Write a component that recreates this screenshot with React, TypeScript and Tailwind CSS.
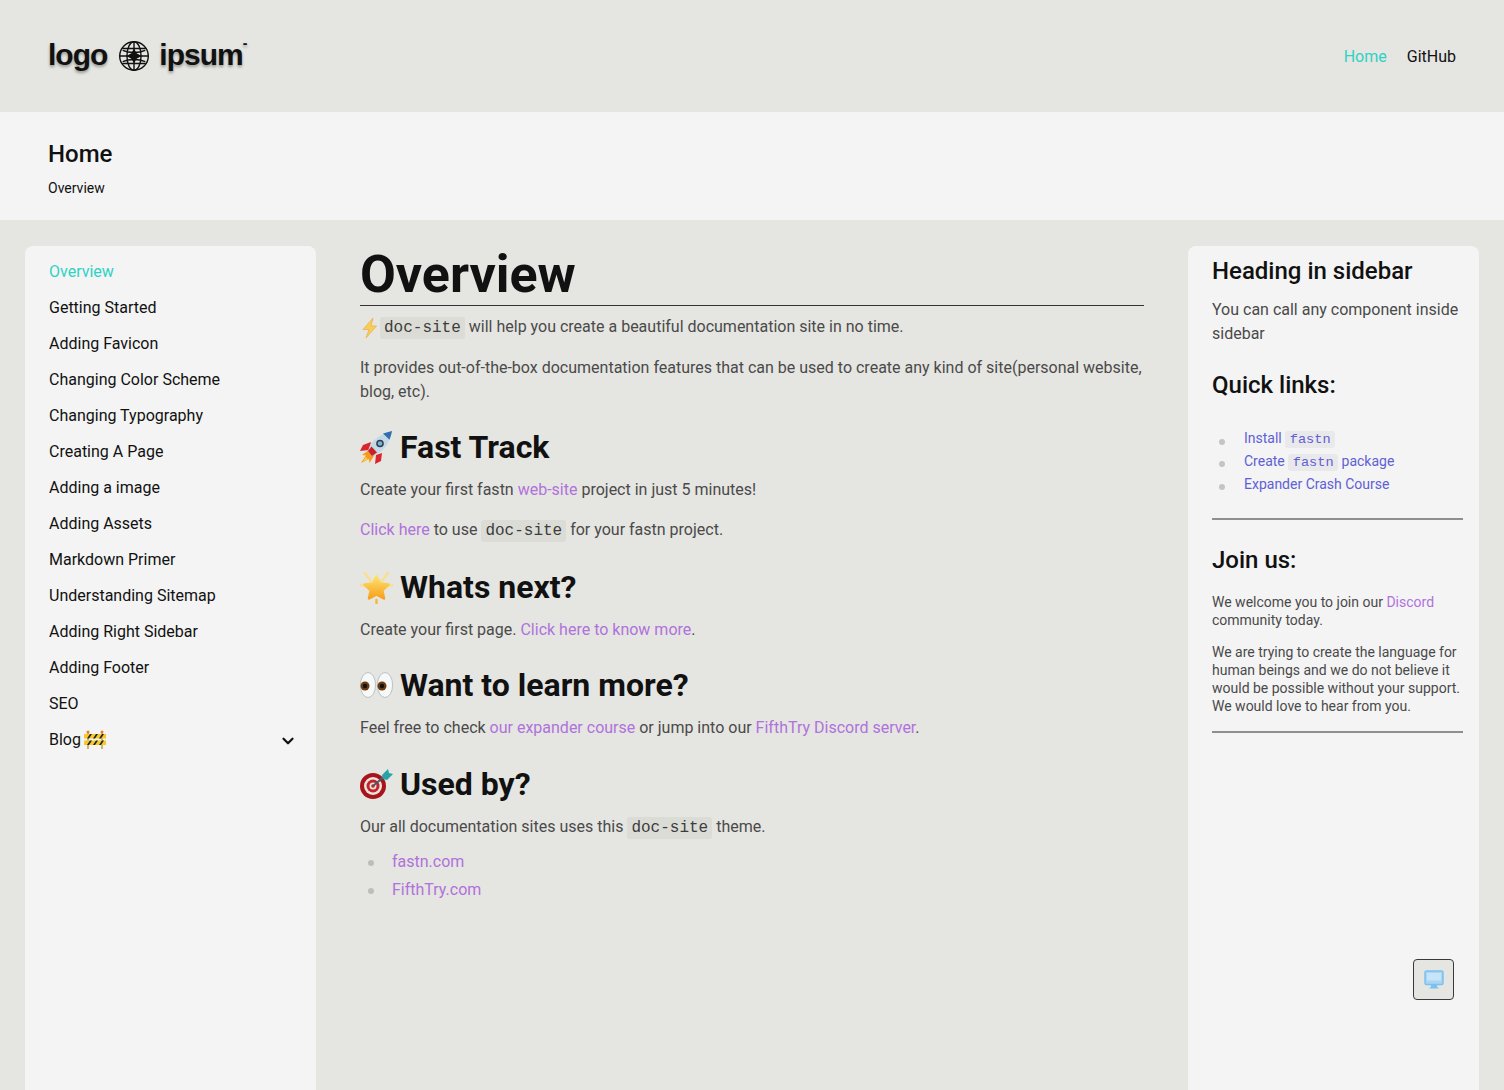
import React from 'react';
import { ChevronDown } from 'lucide-react';

const navItems = [
  'Overview',
  'Getting Started',
  'Adding Favicon',
  'Changing Color Scheme',
  'Changing Typography',
  'Creating A Page',
  'Adding a image',
  'Adding Assets',
  'Markdown Primer',
  'Understanding Sitemap',
  'Adding Right Sidebar',
  'Adding Footer',
  'SEO',
];

const Bolt = () => (
  <svg width="20" height="22" viewBox="0 0 20 22" className="shrink-0">
    <path d="M13 1 3 12.500h6L6 21 16.500 9H11z" fill="#f6cf5a" stroke="#eeb14a" strokeWidth="0.8" strokeLinejoin="round" />
  </svg>
);

const Rocket = () => (
  <svg width="33" height="33" viewBox="0 0 33 33" className="shrink-0">
    <path d="M9 19 2 24l4 .5L1 32l8-4 .5 4 5-8z" fill="#f59a1c" />
    <path d="M6 26l-3 4.500 5-2z" fill="#fbd13a" />
    <path d="M11 11 3 14 0 20l9-1z" fill="#d8262c" />
    <path d="M22 22l-1 8-6 3 1-9z" fill="#d8262c" />
    <path d="M8 20C10 10 20 3 32 0c-2 12-9 22-20 25z" fill="#c4d9e8" />
    <path d="M23 2.500C26 1.500 29 .7 32 0c-.5 3-1.400 6-2.600 8.800z" fill="#2f6fb0" />
    <path d="M8 20l4 5 5-3.500-5.500-6z" fill="#c8202a" />
    <circle cx="20" cy="12.500" r="3.800" fill="#2d3c48" />
    <circle cx="20" cy="12.500" r="2.300" fill="#78b2dd" />
  </svg>
);

const Star = () => (
  <svg width="33" height="33" viewBox="0 0 33 33" className="shrink-0">
    <defs>
      <linearGradient id="starFill" x1="0" y1="0" x2="0" y2="1">
        <stop offset="0" stopColor="#fde36f" />
        <stop offset="1" stopColor="#f9a01b" />
      </linearGradient>
    </defs>
    <path d="M5 2l6 8M28 2l-6 8M0 14l6 1M33 14l-6 1" stroke="#f9e08f" strokeWidth="2.500" strokeLinecap="round" />
    <path d="M16.500 29v3" stroke="#f6b73c" strokeWidth="2.500" strokeLinecap="round" />
    <path d="M16.500 5l3.600 7.500 8.400 1.100-6.200 5.700 1.700 8.200-7.500-4.100-7.500 4.100 1.700-8.200-6.200-5.700 8.400-1.100z" fill="url(#starFill)" stroke="url(#starFill)" strokeWidth="2.500" strokeLinejoin="round" />
  </svg>
);

const Eyes = () => (
  <svg width="33" height="28" viewBox="0 0 33 28" className="shrink-0">
    <ellipse cx="8" cy="14" rx="7.600" ry="12.500" fill="#f7f8f8" stroke="#b6bcbf" strokeWidth="0.9" />
    <ellipse cx="25" cy="14" rx="7.600" ry="12.500" fill="#f7f8f8" stroke="#b6bcbf" strokeWidth="0.9" />
    <circle cx="5" cy="15" r="4.500" fill="#6a3c14" />
    <circle cx="22" cy="15" r="4.500" fill="#6a3c14" />
    <circle cx="5" cy="15" r="2.200" fill="#111" />
    <circle cx="22" cy="15" r="2.200" fill="#111" />
  </svg>
);

const Dart = () => (
  <svg width="33" height="30" viewBox="0 0 33 30" className="shrink-0">
    <circle cx="13" cy="17" r="13" fill="#a8141c" />
    <circle cx="13" cy="17" r="9" fill="#e9e3dc" />
    <circle cx="13" cy="17" r="6.500" fill="#c4232b" />
    <circle cx="13" cy="17" r="3.500" fill="#e9e3dc" />
    <circle cx="13" cy="17" r="1.800" fill="#c4232b" />
    <path d="M13 17 26 6" stroke="#4a5a63" strokeWidth="1.800" />
    <path d="M22 6l6-6 1 4 4 1-6 6-4-1z" fill="#27a3a8" />
  </svg>
);

const Barrier = () => (
  <svg width="22" height="20" viewBox="0 0 22 20" className="shrink-0">
    <path d="M4 1v18M18 1v18" stroke="#c9a14a" strokeWidth="1.600" />
    <circle cx="4" cy="2" r="1.500" fill="#ef7a22" />
    <circle cx="18" cy="2" r="1.500" fill="#ef7a22" />
    <rect x="0" y="4" width="22" height="4.500" fill="#f6c82c" />
    <rect x="0" y="10.500" width="22" height="4.500" fill="#f6c82c" />
    <path d="M3 8.500 6 4h2L5 8.500zM9 8.500 12 4h2l-3 4.500zM15 8.500 18 4h2l-3 4.500zM3 15l3-4.500h2L5 15zM9 15l3-4.500h2L11 15zM15 15l3-4.500h2L17 15z" fill="#222" />
  </svg>
);

const Globe = () => (
  <svg width="32" height="32" viewBox="0 0 34 34" className="shrink-0 ml-[11px] mr-[9px]">
    <g fill="none" stroke="#111" strokeWidth="1.500">
      <circle cx="17" cy="17" r="15.200" />
      <ellipse cx="17" cy="17" rx="7.500" ry="15.200" />
      <path d="M17 2v30M2 17h30M4.500 9h25M4.500 25h25" />
      <path d="M5 11c7 3 17 3 24 0M5 23c7-3 17-3 24 0" />
    </g>
    <path d="M17 9l2.800 5.200L25 17l-5.200 2.800L17 25l-2.800-5.200L9 17l5.200-2.800z" fill="#111" />
  </svg>
);

const MonitorIcon = () => (
  <svg width="20" height="20" viewBox="0 0 20 20">
    <rect x="1" y="1" width="18" height="13.500" rx="1.500" fill="#a9d6f5" stroke="#7cc0ef" strokeWidth="1.500" />
    <rect x="3" y="3" width="14" height="7.500" fill="#c8e4f8" />
    <path d="M7.500 15v2h5v-2zM5.500 18h9" fill="#7cc0ef" stroke="#7cc0ef" strokeWidth="1.200" />
  </svg>
);

const Code = ({ children, small }: { children: React.ReactNode; small?: boolean }) => (
  <code className={`font-['Liberation_Mono',monospace] rounded-[3px] ${small ? 'bg-[#e9e9ec] text-[13.6px] px-[4.500px] py-[1px]' : 'bg-[#dcdcd7] text-[#3d3d3d] text-[16px] px-[4px] py-[2px]'}`}>
    {children}
  </code>
);

const A = ({ children }: { children: React.ReactNode }) => (
  <a className="text-[#b072dc]">{children}</a>
);

const H2 = ({ icon, children, className }: { icon: React.ReactNode; children: React.ReactNode; className: string }) => (
  <h2 className={`flex items-center gap-[7px] h-[44px] text-[32px] leading-[44px] font-bold text-[#111111] ${className}`}>
    {icon}
    <span>{children}</span>
  </h2>
);

const P = ({ children, className = '' }: { children: React.ReactNode; className?: string }) => (
  <p className={`text-[16px] leading-[24px] text-[#4a4a4a] ${className}`}>{children}</p>
);

const Bullet = ({ children }: { children: React.ReactNode }) => (
  <li className="flex items-center h-[28px]">
    <span className="w-[6px] h-[6px] rounded-full bg-[#bdbdbd] ml-[8px] mr-[18px] mt-[2px]" />
    <A>{children}</A>
  </li>
);

const SideLink = ({ children }: { children: React.ReactNode }) => (
  <li className="flex items-center h-[22.400px] text-[14px] text-[#6060d4]">
    <span className="w-[6px] h-[6px] rounded-full bg-[#c4c4c4] ml-[7px] mr-[19px] mt-[5px]" />
    <span className="whitespace-pre">{children}</span>
  </li>
);

export default function App() {
  return (
    <div className="relative h-[1090px] overflow-hidden bg-[#e5e5e1] font-['Roboto',sans-serif]">
      <header className="h-[112px] px-[48px] flex items-center justify-between">
        <div className="flex items-center font-['Liberation_Sans',sans-serif] font-bold text-[30px] tracking-[-1px] text-[#111] [text-shadow:0_2px_3px_rgba(0,0,0,0.35)]">
          <span className="mb-[4px]">logo</span>
          <Globe />
          <span className="mb-[4px]">ipsum</span>
          <span className="text-[14px] leading-none tracking-normal self-start mt-[4px]">-</span>
        </div>
        <nav className="flex gap-[20px] text-[16px] mt-[2px]">
          <a className="text-[#2fd2c3]">Home</a>
          <a className="text-[#111]">GitHub</a>
        </nav>
      </header>

      <div className="h-[108px] bg-[#f4f4f4] px-[48px] pt-[26px]">
        <div className="text-[24px] leading-[32px] font-medium text-[#111]">Home</div>
        <div className="text-[14px] leading-[20px] mt-[8px] text-[#111]">Overview</div>
      </div>

      <div className="flex gap-[44px] px-[25px] pt-[26px]">
        <aside className="w-[291px] h-[900px] shrink-0 bg-[#f4f4f4] rounded-t-[8px] px-[24px] pt-[8px]">
          <ul className="text-[16px] text-[#111]">
            {navItems.map((item, i) => (
              <li key={item} className={`h-[36px] flex items-center ${i === 0 ? 'text-[#2fd2c3]' : ''}`}>
                {item}
              </li>
            ))}
            <li className="h-[36px] flex items-center">
              Blog
              <span className="ml-[3px]"><Barrier /></span>
              <ChevronDown className="ml-auto mr-[-5px] mt-[2px]" size={18} strokeWidth={3} color="#111" />
            </li>
          </ul>
        </aside>

        <main className="w-[784px] shrink-0">
          <h1 className="h-[60px] text-[52px] leading-[58px] font-bold text-[#111] border-b border-[#333]">Overview</h1>
          <P className="flex items-center mt-[9px]">
            <Bolt />
            <span className="whitespace-pre"><Code>doc-site</Code> will help you create a beautiful documentation site in no time.</span>
          </P>
          <P className="mt-[16px]">
            It provides out-of-the-box documentation features that can be used to create any kind of site(personal website, blog, etc).
          </P>
          <H2 icon={<Rocket />} className="mt-[21px]">Fast Track</H2>
          <P className="mt-[9px]">Create your first fastn <A>web-site</A> project in just 5 minutes!</P>
          <P className="mt-[16px]"><A>Click here</A> to use <Code>doc-site</Code> for your fastn project.</P>
          <H2 icon={<Star />} className="mt-[22px]">Whats next?</H2>
          <P className="mt-[9px]">Create your first page. <A>Click here to know more</A>.</P>
          <H2 icon={<Eyes />} className="mt-[21px]">Want to learn more?</H2>
          <P className="mt-[9px]">Feel free to check <A>our expander course</A> or jump into our <A>FifthTry Discord server</A>.</P>
          <H2 icon={<Dart />} className="mt-[22px]">Used by?</H2>
          <P className="mt-[9px]">Our all documentation sites uses this <Code>doc-site</Code> theme.</P>
          <ul className="mt-[8px] text-[16px]">
            <Bullet>fastn.com</Bullet>
            <Bullet>FifthTry.com</Bullet>
          </ul>
        </main>

        <aside className="w-[291px] h-[900px] shrink-0 bg-[#f4f4f4] rounded-t-[8px] pl-[24px] pr-[16px] pt-[8px]">
          <h3 className="text-[24px] leading-[34px] font-medium text-[#111]">Heading in sidebar</h3>
          <p className="mt-[10px] text-[16px] leading-[24px] text-[#4a4a4a]">You can call any component inside sidebar</p>
          <h3 className="mt-[22px] text-[24px] leading-[34px] font-medium text-[#111]">Quick links:</h3>
          <ul className="mt-[26.200px]">
            <SideLink>Install <Code small>fastn</Code></SideLink>
            <SideLink>Create <Code small>fastn</Code> package</SideLink>
            <SideLink>Expander Crash Course</SideLink>
          </ul>
          <hr className="mt-[23.100px] border-0 h-[2px] bg-[#8f8f8f]" />
          <h3 className="mt-[23px] text-[24px] leading-[34px] font-medium text-[#111]">Join us:</h3>
          <p className="mt-[16px] text-[14px] leading-[18px] text-[#4a4a4a]">We welcome you to join our <A>Discord</A> community today.</p>
          <p className="mt-[14px] text-[14px] leading-[18px] text-[#4a4a4a]">We are trying to create the language for human beings and we do not believe it would be possible without your support. We would love to hear from you.</p>
          <hr className="mt-[16px] border-0 h-[2px] bg-[#8f8f8f]" />
        </aside>
      </div>

      <button className="absolute left-[1413px] top-[959px] w-[41px] h-[41px] flex items-center justify-center rounded-[4px] border border-[#3a3a3a] bg-[#e5e5e1]">
        <MonitorIcon />
      </button>
    </div>
  );
}
